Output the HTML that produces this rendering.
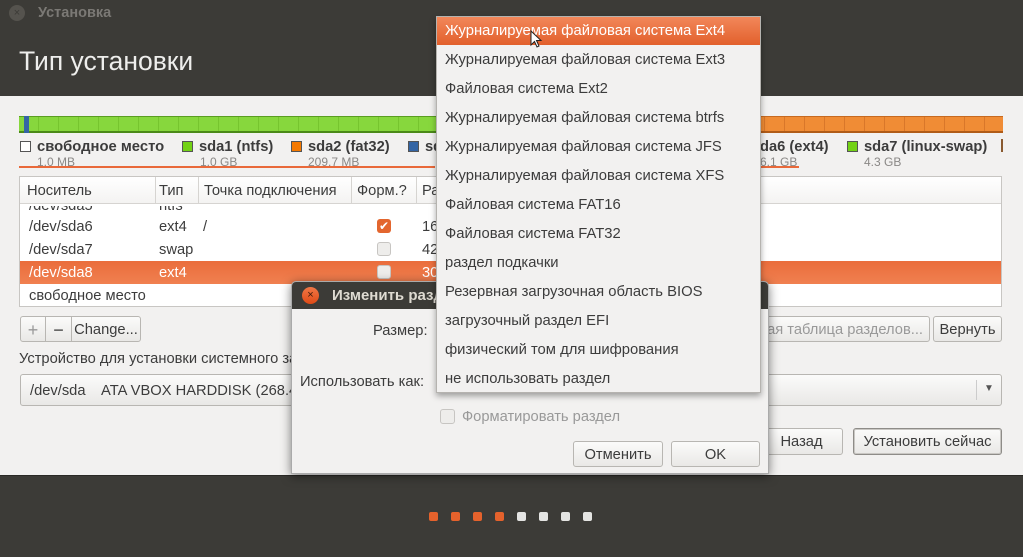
<!DOCTYPE html>
<html><head><meta charset="utf-8"><style>
*{margin:0;padding:0;box-sizing:border-box}
body{width:1023px;height:557px;overflow:hidden;position:relative;background:#f2f1f0;font-family:"Liberation Sans","DejaVu Sans",sans-serif;font-size:14.7px;color:#3c3c3c}
.a{position:absolute;white-space:nowrap}
.t{margin-top:1px}
.btn{position:absolute;border:1px solid #b8b6b2;border-radius:3px;background:linear-gradient(#fbfbfa,#e9e8e6);text-align:center;color:#3c3c3c;font-size:14.7px;padding-top:1px}
.cb{position:absolute;width:14px;height:14px;border:1px solid #c7c5c2;border-radius:3px;background:#eeedeb}
.sw{display:inline-block;width:11px;height:11px;border:1px solid #555;vertical-align:-1px;margin-right:6px}
.mi{position:absolute;left:445px;font-size:14.8px;color:#3c3c3c}
.dot{position:absolute;top:512px;width:9px;height:9px;border-radius:2px}
</style></head><body>
<div class="a" style="left:0;top:0;width:1023px;height:96px;background:#3c3b37"></div>
<div class="a" style="left:9px;top:5px;width:16px;height:16px;border-radius:50%;background:#55534e;color:#3c3b37;font-size:11px;text-align:center;line-height:16px">×</div>
<div class="a" style="left:38px;top:5px;color:#7b7975;font-weight:bold;font-size:14.5px">Установка</div>
<div class="a" style="left:19px;top:46px;color:#eeeeec;font-size:26.5px">Тип установки</div>

<div class="a" style="left:19px;top:116px;width:984px;height:17px;background:repeating-linear-gradient(90deg,#87d73d 0 19px,#76c52e 19px 20px);border-top:1px solid #5a9e20;border-bottom:2px solid #4b8a18"></div>
<div class="a" style="left:605px;top:116px;width:398px;height:17px;background:repeating-linear-gradient(90deg,#f08c35 0 19px,#d9772a 19px 20px);border-top:1px solid #c76a20;border-bottom:2px solid #b05c18"></div>
<div class="a" style="left:24px;top:116px;width:5px;height:17px;background:#3465a4"></div>

<div class="a" style="left:20px;top:139px;font-weight:bold;font-size:14.8px"><span class="sw" style="background:#fff"></span>свободное место</div>
<div class="a" style="left:37px;top:155px;font-size:12px;color:#8a8886">1.0 MB</div>
<div class="a" style="left:182px;top:139px;font-weight:bold"><span class="sw" style="background:#73d216"></span>sda1 (ntfs)</div>
<div class="a" style="left:200px;top:155px;font-size:12px;color:#8a8886">1.0 GB</div>
<div class="a" style="left:291px;top:139px;font-weight:bold"><span class="sw" style="background:#f57900"></span>sda2 (fat32)</div>
<div class="a" style="left:308px;top:155px;font-size:12px;color:#8a8886">209.7 MB</div>
<div class="a" style="left:408px;top:139px;font-weight:bold"><span class="sw" style="background:#3465a4"></span>sd</div>
<div class="a" style="left:760px;top:139px;font-weight:bold">da6 (ext4)</div>
<div class="a" style="left:760px;top:155px;font-size:12px;color:#8a8886">6.1 GB</div>
<div class="a" style="left:847px;top:139px;font-weight:bold"><span class="sw" style="background:#73d216"></span>sda7 (linux-swap)</div>
<div class="a" style="left:864px;top:155px;font-size:12px;color:#8a8886">4.3 GB</div>
<div class="a" style="left:1001px;top:139px;width:2px;height:13px;background:#8a5a30"></div>
<div class="a" style="left:19px;top:166px;width:416px;height:2px;background:#e9693a"></div>
<div class="a" style="left:760px;top:166px;width:39px;height:2px;background:#e9693a"></div>

<div class="a" style="left:19px;top:176px;width:983px;height:131px;background:#fff;border:1px solid #c8c6c3;overflow:hidden">
 <div class="a" style="left:0;top:0;width:983px;height:27px;background:linear-gradient(#fff,#f4f3f2);border-bottom:1px solid #d6d4d1"></div>
 <div class="a" style="left:7px;top:6px">Носитель</div>
 <div class="a" style="left:135px;top:0;width:1px;height:27px;background:#d6d4d1"></div>
 <div class="a" style="left:139px;top:6px">Тип</div>
 <div class="a" style="left:178px;top:0;width:1px;height:27px;background:#d6d4d1"></div>
 <div class="a" style="left:184px;top:6px">Точка подключения</div>
 <div class="a" style="left:331px;top:0;width:1px;height:27px;background:#d6d4d1"></div>
 <div class="a" style="left:337px;top:6px">Форм.?</div>
 <div class="a" style="left:396px;top:0;width:1px;height:27px;background:#d6d4d1"></div>
 <div class="a" style="left:402px;top:6px">Ра</div>
 <div class="a" style="left:9px;top:21px;clip-path:inset(8px 0 0 0)">/dev/sda5</div>
 <div class="a" style="left:139px;top:21px;clip-path:inset(8px 0 0 0)">ntfs</div>
 <div class="a" style="left:9px;top:42px">/dev/sda6</div><div class="a" style="left:139px;top:42px">ext4</div><div class="a" style="left:183px;top:42px">/</div>
 <div class="a" style="left:357px;top:42px;width:14px;height:14px;border-radius:3px;background:#e3662e;color:#fff;font-size:12px;line-height:14px;text-align:center">✔</div>
 <div class="a" style="left:402px;top:42px">16</div>
 <div class="a" style="left:9px;top:65px">/dev/sda7</div><div class="a" style="left:139px;top:65px">swap</div>
 <div class="cb" style="left:357px;top:65px"></div><div class="a" style="left:402px;top:65px">42</div>
 <div class="a" style="left:0;top:84px;width:983px;height:23px;background:linear-gradient(#ea6d3c,#f08050)"></div>
 <div class="a" style="left:9px;top:88px;color:#fff">/dev/sda8</div><div class="a" style="left:139px;top:88px;color:#fff">ext4</div>
 <div class="cb" style="left:357px;top:88px"></div><div class="a" style="left:402px;top:88px;color:#fff">30</div>
 <div class="a" style="left:9px;top:111px">свободное место</div>
</div>

<div class="btn" style="left:20px;top:316px;width:26px;height:26px;line-height:24px;color:#999;font-size:18px;border-radius:3px 0 0 3px">+</div>
<div class="btn" style="left:45px;top:316px;width:27px;height:26px;line-height:24px;font-size:18px;border-radius:0">−</div>
<div class="btn" style="left:71px;top:316px;width:70px;height:26px;line-height:24px;border-radius:0 3px 3px 0">Change...</div>
<div class="btn" style="left:700px;top:316px;width:230px;height:26px;line-height:24px;color:#999;text-align:right;padding-right:6px">Новая таблица разделов...</div>
<div class="btn" style="left:933px;top:316px;width:69px;height:26px;line-height:24px">Вернуть</div>
<div class="a" style="left:19px;top:351px">Устройство для установки системного загрузчика:</div>
<div class="btn" style="left:20px;top:374px;width:982px;height:32px;line-height:30px;text-align:left;padding-left:9px">/dev/sda&nbsp;&nbsp;&nbsp; ATA VBOX HARDDISK (268.4 GB)</div>
<div class="a" style="left:976px;top:380px;width:1px;height:20px;background:#ccc"></div>
<div class="a" style="left:984px;top:383px;font-size:10px;color:#555">▼</div>
<div class="btn" style="left:760px;top:428px;width:83px;height:27px;line-height:25px">Назад</div>
<div class="btn" style="left:853px;top:428px;width:149px;height:27px;line-height:25px;border:1px solid #8e8c88;box-shadow:inset 0 0 0 1px #c9c7c3">Установить сейчас</div>

<div class="a" style="left:0;top:475px;width:1023px;height:82px;background:#3c3b37;border-top:1px solid #2a2926"></div>
<div class="dot" style="left:429px;background:#e5622c"></div>
<div class="dot" style="left:451px;background:#e5622c"></div>
<div class="dot" style="left:473px;background:#e5622c"></div>
<div class="dot" style="left:495px;background:#e5622c"></div>
<div class="dot" style="left:517px;background:#e4e4e2"></div>
<div class="dot" style="left:539px;background:#e4e4e2"></div>
<div class="dot" style="left:561px;background:#e4e4e2"></div>
<div class="dot" style="left:583px;background:#e4e4e2"></div>

<div class="a" style="left:291px;top:281px;width:478px;height:193px;background:#f2f1f0;border:1px solid #aaa;box-shadow:0 2px 10px rgba(0,0,0,.5);border-radius:5px 5px 0 0;overflow:hidden">
 <div class="a" style="left:0;top:0;width:478px;height:27px;background:#3c3b37"></div>
 <div class="a" style="left:10px;top:5px;width:17px;height:17px;border-radius:50%;background:linear-gradient(#f07746,#df4a16);color:#3c1a0c;font-size:11px;text-align:center;line-height:17px">×</div>
 <div class="a" style="left:40px;top:5px;color:#dfdbd2;font-weight:bold;font-size:15px">Изменить раздел</div>
 <div class="a" style="left:81px;top:41px">Размер:</div>
 <div class="a" style="left:8px;top:92px">Использовать как:</div>
 <div class="cb" style="left:148px;top:127px;width:15px;height:15px"></div>
 <div class="a" style="left:170px;top:127px;color:#999">Форматировать раздел</div>
 <div class="btn" style="left:281px;top:159px;width:90px;height:26px;line-height:24px">Отменить</div>
 <div class="btn" style="left:379px;top:159px;width:89px;height:26px;line-height:24px">OK</div>
</div>

<div class="a" style="left:436px;top:16px;width:325px;height:377px;background:#f2f1f0;border:1px solid #b5b3af;box-shadow:0 3px 6px rgba(0,0,0,.35)"></div>
<div class="a" style="left:437px;top:17px;width:323px;height:28px;background:linear-gradient(#f2875a,#e2602c)"></div>
<div class="mi" style="top:23px;color:#fff">Журналируемая файловая система Ext4</div>
<div class="mi" style="top:52px">Журналируемая файловая система Ext3</div>
<div class="mi" style="top:81px">Файловая система Ext2</div>
<div class="mi" style="top:110px">Журналируемая файловая система btrfs</div>
<div class="mi" style="top:139px">Журналируемая файловая система JFS</div>
<div class="mi" style="top:168px">Журналируемая файловая система XFS</div>
<div class="mi" style="top:197px">Файловая система FAT16</div>
<div class="mi" style="top:226px">Файловая система FAT32</div>
<div class="mi" style="top:255px">раздел подкачки</div>
<div class="mi" style="top:284px">Резервная загрузочная область BIOS</div>
<div class="mi" style="top:313px">загрузочный раздел EFI</div>
<div class="mi" style="top:342px">физический том для шифрования</div>
<div class="mi" style="top:371px">не использовать раздел</div>
<svg class="a" style="left:530px;top:30px" width="14" height="20" viewBox="0 0 14 20"><path d="M1 1 L1 15 L4.5 11.5 L7 17 L9 16 L6.5 10.5 L11 10.5 Z" fill="#fff" stroke="#222" stroke-width="1"/></svg>
</body></html>
